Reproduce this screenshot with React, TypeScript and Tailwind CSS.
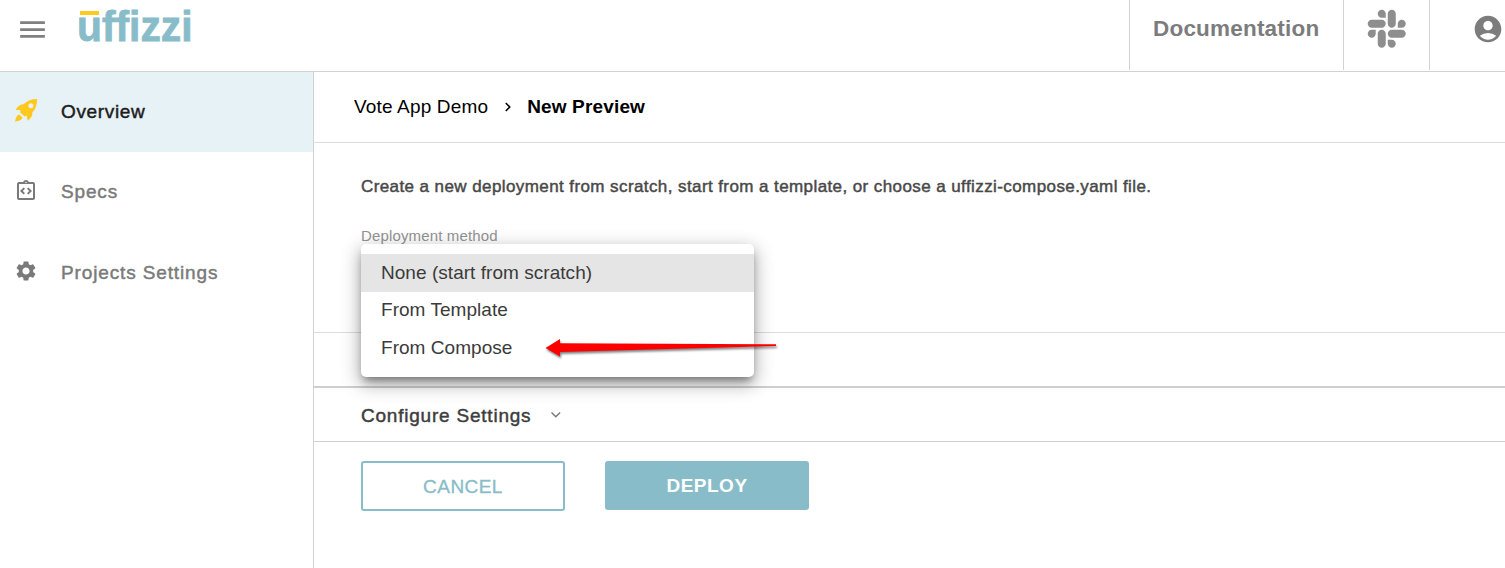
import React from "react";
import { MdMenu, MdAccountCircle, MdSettings, MdOutlineIntegrationInstructions } from "react-icons/md";
import { FaSlack } from "react-icons/fa";

const medium = "[-webkit-text-stroke:0.45px_currentColor]";

function Logo() {
  return (
    <svg width="124" height="56" viewBox="0 0 124 56" className="shrink-0">
      <text
        x="0"
        y="41"
        textLength="115.5"
        lengthAdjust="spacingAndGlyphs"
        fill="#88bcc9"
        stroke="#88bcc9"
        strokeWidth="0.8"
        className="font-['Liberation_Sans',sans-serif] text-[43px] font-bold"
      >
        uffizzi
      </text>
      <rect x="3" y="11" width="19" height="4" fill="#ffcb1f" />
    </svg>
  );
}

function Rocket() {
  return (
    <svg width="36" height="36" viewBox="0 0 36 36" fill="#ffc81c" className="ml-[10px] mr-[15px] shrink-0">
      <path
        fillRule="evenodd"
        d="M27 9C21.5 9 17 10.8 13.6 14.2C10.4 14.2 7.6 16.2 5.6 19.8L10.8 20.2L10 22.2L14.6 26.4L16.8 25.4L17.6 30.8C21 28.6 22.6 26 22.4 22.6C25.8 19 27.2 14.6 27 9ZM20.9 13.2a2.5 2.5 0 1 1 0 5a2.5 2.5 0 1 1 0-5Z"
      />
      <path d="M9.2 24.6C6.8 25.2 5.8 27.6 5 31.6C9 31.2 11.8 30.2 12.4 27.6Z" />
    </svg>
  );
}

function Header() {
  return (
    <header className="flex h-[72px] shrink-0 border-b border-[#d2d2d2]">
      <MdMenu className="ml-4 mt-[13px] size-[33px] shrink-0 text-[#808080]" />
      <div className="ml-7 grow">
        <Logo />
      </div>
      <nav className="flex h-[70px]">
        <div className="w-[214px] border-l border-[#d2d2d2] pl-[23px] pt-[14px] text-[22.5px] font-bold leading-[30px] tracking-[0.2px] text-[#7c7c7c]">
          Documentation
        </div>
        <div className="w-[86px] border-l border-[#d2d2d2] pl-[21px] pt-[7px]">
          <FaSlack className="size-[43.5px] text-[#8e8e8e]" />
        </div>
        <div className="w-[76px] border-l border-[#d2d2d2] pl-[42px] pt-[13px]">
          <MdAccountCircle className="size-8 text-[#7c7c7c]" />
        </div>
      </nav>
    </header>
  );
}

function Sidebar() {
  return (
    <aside className="flex w-[314px] shrink-0 flex-col border-r border-[#d2d2d2] text-[19px] leading-[26px] text-[#7a7a7a]">
      <div className="flex h-20 items-center bg-[#e7f2f7] text-[#1c1c1c]">
        <div className="mb-2">
          <Rocket />
        </div>
        <span className={`tracking-[0.65px] ${medium}`}>Overview</span>
      </div>
      <div className="flex h-20 items-center pl-[14px]">
        <MdOutlineIntegrationInstructions className="mb-0.5 mr-[23px] size-6" />
        <span className={`tracking-[0.85px] ${medium}`}>Specs</span>
      </div>
      <div className="flex h-[82px] items-center pl-[14px]">
        <MdSettings className="mb-1 mr-[23px] size-6" />
        <span className={`tracking-[0.87px] ${medium}`}>Projects Settings</span>
      </div>
    </aside>
  );
}

function Arrow() {
  return (
    <svg
      width="240"
      height="28"
      viewBox="0 0 240 28"
      className="absolute left-[180px] top-[90px] drop-shadow-[1px_2px_1px_rgba(0,0,0,0.5)]"
    >
      <path d="M4.5 14 19 5v4.3L235 10.3v1.8L19 18v4.5Z" fill="#fc0000" />
    </svg>
  );
}

function Menu() {
  return (
    <div className="absolute left-[47px] top-[101px] h-[133px] w-[393px] rounded-[5px] bg-white pt-[10px] text-[19px] tracking-[0.04px] text-[#3b3b3b] shadow-[0_6px_8px_-3px_rgba(0,0,0,0.4),0_6px_18px_2px_rgba(0,0,0,0.3)]">
      <div className="h-[38px] bg-[#e5e5e5] pl-5 leading-[38px]">None (start from scratch)</div>
      <div className="h-[37px] pl-5 leading-[35px]">From Template</div>
      <div className="h-[38px] pl-5 leading-[38px]">From Compose</div>
      <Arrow />
    </div>
  );
}

export default function App() {
  return (
    <div className="flex h-[568px] w-[1505px] flex-col overflow-hidden bg-white font-['Liberation_Sans',Arial,sans-serif]">
      <Header />
      <div className="flex min-h-0 grow">
        <Sidebar />
        <main className="flex grow flex-col">
          <div className="flex h-[71px] items-center border-b border-[#dcdcdc] pl-10 text-[19px] leading-[26px] tracking-[0.16px] text-black">
            <span>Vote App Demo</span>
            <svg width="8" height="10" viewBox="0 0 8 10" className="ml-4 mr-[15px]">
              <path d="m1.8 1 3.9 4-3.9 4" fill="none" stroke="currentColor" strokeWidth="1.6" />
            </svg>
            <span className="font-bold">New Preview</span>
          </div>
          <section className="relative z-10 h-[190px] border-b border-[#dcdcdc] pl-[47px]">
            <p className={`pt-8 text-[17px] leading-6 tracking-[0.41px] text-[#484848] ${medium}`}>
              Create a new deployment from scratch, start from a template, or choose a uffizzi-compose.yaml file.
            </p>
            <div className="pt-[27px] text-[15px] leading-5 tracking-[0.15px] text-[#939393]">Deployment method</div>
            <Menu />
          </section>
          <div className="h-[55px] border-b-2 border-[#cfcfcf]" />
          <div className="flex h-[54px] items-center border-b border-[#cfcfcf] pl-[47px] text-[19px] leading-[26px] text-[#3d3d3d]">
            <span className={`pt-0.5 tracking-[0.78px] ${medium}`}>Configure Settings</span>
            <svg width="12" height="8" viewBox="0 0 12 8" className="ml-[19px]">
              <path d="m1.5 1.5 4.3 4.3 4.3-4.3" fill="none" stroke="#777" strokeWidth="1.4" />
            </svg>
          </div>
          <div className="flex gap-10 pl-[47px] pt-[19px] text-[19px]">
            <button className="h-[50px] w-[204px] rounded-[3px] border-2 border-[#88bcc9] pt-0.5 tracking-[0.45px] text-[#88bcc9] [-webkit-text-stroke:0.3px_currentColor]">
              CANCEL
            </button>
            <button className="h-[49px] w-[204px] rounded-[3px] bg-[#88bcc9] pt-0.5 font-bold tracking-[0.5px] text-white">
              DEPLOY
            </button>
          </div>
        </main>
      </div>
    </div>
  );
}
